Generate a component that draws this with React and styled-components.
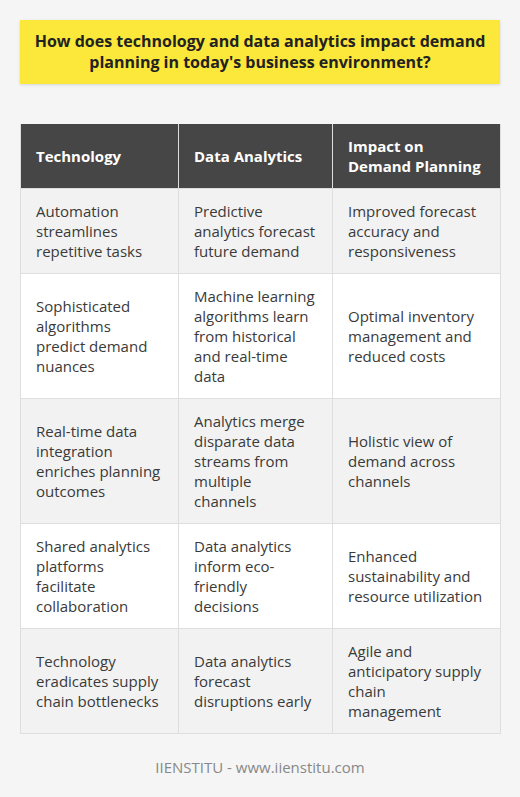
import React from "react";
import styled, { createGlobalStyle } from "styled-components";

const GlobalStyle = createGlobalStyle`
  body {
    margin: 0;
    background: #f5f5f5;
    font-family: "Open Sans", "Liberation Sans", sans-serif;
  }
`;

const Page = styled.div`
  padding: 20px 20px 0 20px;
`;

const TitleBox = styled.div`
  background: #fbe83a;
  padding: 11px 8px;
  text-align: center;
  font-weight: bold;
  font-size: 16px;
  line-height: 21px;
  color: #222;
  box-shadow: 0 1px 3px rgba(0, 0, 0, 0.12);
`;

const Table = styled.table`
  width: 480px;
  margin-top: 40px;
  border-collapse: collapse;
  table-layout: fixed;
  font-size: 15px;
  line-height: 20px;
`;

const HeadCell = styled.th`
  background: #464646;
  color: #fff;
  font-weight: bold;
  text-align: left;
  padding: 12px 16px 12px 15px;
  border: 1px solid #ddd;
  border-top: none;
`;

const Row = styled.tr`
  background: ${(p) => (p.$shade ? "#f2f2f2" : "#ffffff")};
`;

const Cell = styled.td`
  color: #3a3a3a;
  padding: 12px 16px 12px 15px;
  border: 1px solid #dedede;
  vertical-align: middle;
  white-space: pre-line;
`;

const Footer = styled.div`
  text-align: center;
  color: #888;
  font-size: 15px;
  padding: 23px 0;
`;

const rows = [
  [
    "Automation streamlines repetitive tasks",
    "Predictive analytics forecast future demand",
    "Improved forecast accuracy and responsiveness",
  ],
  [
    "Sophisticated algorithms predict demand nuances",
    "Machine learning algorithms learn from historical and real-time data",
    "Optimal inventory management and reduced costs",
  ],
  [
    "Real-time data integration enriches planning outcomes",
    "Analytics merge disparate data streams from multiple channels",
    "Holistic view of demand across channels",
  ],
  [
    "Shared analytics platforms facilitate collaboration",
    "Data analytics inform eco-friendly\ndecisions",
    "Enhanced sustainability and resource utilization",
  ],
  [
    "Technology eradicates supply chain bottlenecks",
    "Data analytics forecast disruptions early",
    "Agile and anticipatory supply chain\nmanagement",
  ],
];

export default function App() {
  return (
    <Page>
      <GlobalStyle />
      <TitleBox>
        How does technology and data analytics impact demand planning in
        today's business environment?
      </TitleBox>
      <Table>
        <colgroup>
          <col style={{ width: 158 }} />
          <col style={{ width: 154 }} />
          <col style={{ width: 168 }} />
        </colgroup>
        <thead>
          <tr>
            <HeadCell>Technology</HeadCell>
            <HeadCell>Data Analytics</HeadCell>
            <HeadCell>Impact on Demand Planning</HeadCell>
          </tr>
        </thead>
        <tbody>
          {rows.map((r, i) => (
            <Row key={i} $shade={i % 2 === 0}>
              {r.map((c, j) => (
                <Cell key={j}>{c}</Cell>
              ))}
            </Row>
          ))}
        </tbody>
      </Table>
      <Footer>IIENSTITU - www.iienstitu.com</Footer>
    </Page>
  );
}
